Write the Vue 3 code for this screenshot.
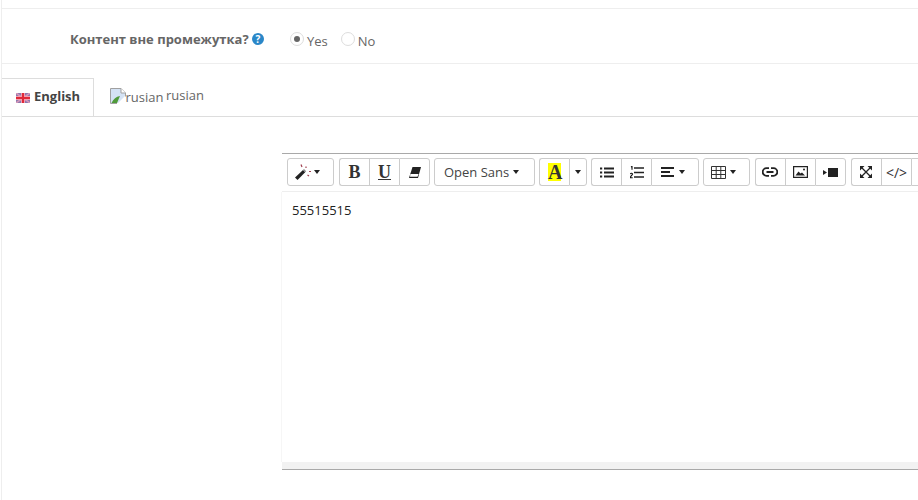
<script setup>
</script>

<template>
  <div class="page">
    <div class="row radio-row">
      <div class="label">Контент вне промежутка? <span class="help">?</span></div>
      <div class="radios">
        <label class="radio"><span class="dot on"></span><span class="rt">Yes</span></label>
        <label class="radio"><span class="dot"></span><span class="rt">No</span></label>
      </div>
    </div>
    <div class="tabs">
      <div class="tab active">
        <svg class="flag" width="14" height="10" viewBox="0 0 14 10"><rect width="14" height="10" fill="#8a78b0"/><path d="M0 0l14 10M14 0L0 10" stroke="#d898b8" stroke-width="1.500"/><path d="M7 0v10M0 5h14" stroke="#f0a0b0" stroke-width="4"/><path d="M7 0v10M0 5h14" stroke="#e02838" stroke-width="2"/></svg>
        <span>English</span>
      </div>
      <div class="tab other">
        <svg class="broken" width="16" height="16" viewBox="0 0 16 16"><path d="M1 1h10v4h4v3L8 15H1z" fill="#d4e2f4"/><path d="M1.500 15c2-4 4.500-6.500 8.500-7l-3 7z" fill="#4f9a3a"/><path d="M.5 15.500V.5h10.500l4.500 4.500v3.500M.5 15.500h6.500" fill="none" stroke="#a0a0a0"/><path d="M11 .5V5h4.500" fill="#fff" stroke="#a0a0a0"/></svg><span class="alt">rusian</span>
        <span class="name">rusian</span>
      </div>
    </div>
    <div class="editor-wrap">
      <div class="editor">
        <div class="toolbar">
          <div class="group wider"><button class="btn w47 start"><svg width="16" height="16" viewBox="0 0 16 16"><path d="M0 13.500L8 6l2.200 2.200L2.500 16z" fill="#222"/><path d="M8 6l1-1 2.200 2.200-1 1z" fill="#888"/><path d="M6 .5l1 2.500M11 2.500V4M14 7.500h2M12.500 11l1.500 1" stroke="#a04050" stroke-width="1.200"/></svg><i class="caret c2"></i></button></div>
          <div class="group">
            <button class="btn w30 serif">B</button>
            <button class="btn w30 serif u">U</button>
            <button class="btn w31"><svg width="12" height="11" viewBox="0 0 12 11"><path d="M3.500 0H12L9 11H0z" fill="#222"/><path d="M1.400 7h8.200L8.500 9.800H1z" fill="#fff"/></svg></button>
          </div>
          <div class="group"><button class="btn w101 font">Open Sans<i class="caret c4"></i></button></div>
          <div class="group">
            <button class="btn w30"><span class="hl">A</span></button>
            <button class="btn w18"><i class="caret c0"></i></button>
          </div>
          <div class="group">
            <button class="btn w30"><svg width="14" height="11" viewBox="0 0 14 11"><path d="M4 1.500h10M4 5.500h10M4 9.500h10" stroke="#222" stroke-width="1.800"/><path d="M0 1.500h2.200M0 5.500h2.200M0 9.500h2.200" stroke="#222" stroke-width="2"/></svg></button>
            <button class="btn w30"><svg width="14" height="13" viewBox="0 0 14 13"><path d="M4 2h10M4 6.500h10M4 11h10" stroke="#222" stroke-width="1.700"/><path d="M1 1l1-.6v3.400M.3 8c.4-1 2.400-1 2.200.3-.1.8-2 1.500-2.200 3.400h2.400" fill="none" stroke="#111" stroke-width="1.100"/></svg></button>
            <button class="btn w48 start s8"><svg width="13" height="10" viewBox="0 0 13 10"><path d="M0 1h13M0 5h9M0 9h13" stroke="#222" stroke-width="1.800"/></svg><i class="caret c1"></i></button>
          </div>
          <div class="group wider"><button class="btn w47 start"><svg width="15" height="13" viewBox="0 0 15 13"><path d="M.5.5h14v12H.5zM.5 4.500h14M.5 8.500h14M5.200.5v12M9.800.5v12" fill="none" stroke="#333"/></svg><i class="caret c4"></i></button></div>
          <div class="group wider">
            <button class="btn w30"><svg class="nudge" width="16" height="10" viewBox="0 0 16 10"><path d="M7 1.200H4.500a3.800 3.800 0 0 0 0 7.600H7M9 1.200h2.500a3.800 3.800 0 0 1 0 7.600H9M4.500 5h7" fill="none" stroke="#222" stroke-width="1.800"/></svg></button>
            <button class="btn w30"><svg width="15" height="12" viewBox="0 0 15 12"><path d="M.6.6h13.800v10.800H.6z" fill="#fff" stroke="#222" stroke-width="1.200"/><path d="M2.500 9.500l3-4 2 2 1.500-1 3 3z" fill="#222"/><circle cx="11" cy="3.500" r="1" fill="#222"/></svg></button>
            <button class="btn w31"><svg width="15" height="9" viewBox="0 0 15 9"><path d="M5 0h10v9H5z" fill="#222"/><path d="M0 2l4 2.500L0 7z" fill="#222"/></svg></button>
          </div>
          <div class="group">
            <button class="btn w30"><svg class="nudge" width="12" height="12" viewBox="0 0 12 12"><path d="M2 2l8 8M10 2l-8 8" stroke="#222" stroke-width="1.300"/><path d="M0 0h4.500L0 4.500zM12 0v4.500L7.500 0zM0 12V7.500L4.500 12zM12 12H7.500L12 7.500z" fill="#222"/></svg></button>
            <button class="btn w30 code">&lt;/&gt;</button>
            <button class="btn w30"></button>
          </div>
        </div>
        <div class="content">55515515</div>
        <div class="status"></div>
      </div>
    </div>
  </div>
</template>

<style>
html, body { margin: 0; background: #fff; overflow: hidden; }
</style>

<style scoped>
.page {
  width: 917px;
  height: 500px;
  overflow: hidden;
  box-sizing: border-box;
  padding-top: 8px;
  border-left: 1px solid #eee;
  margin-left: 1px;
  font-family: "Open Sans", sans-serif;
  font-size: 13px;
  color: #555;
}
.radio-row {
  display: flex;
  height: 56px;
  box-sizing: border-box;
  border-top: 1px solid #eee;
  border-bottom: 1px solid #eee;
  align-items: flex-start;
}
.label {
  width: 262px;
  box-sizing: border-box;
  text-align: right;
  font-weight: 700;
  color: #666;
  padding-top: 21px;
  line-height: 18px;
  white-space: nowrap;
}
.help {
  display: inline-block;
  width: 12px;
  height: 12px;
  border-radius: 50%;
  background: #2a87c8;
  color: #fff;
  font-size: 10px;
  line-height: 12px;
  text-align: center;
  vertical-align: 1px;
}
.radios { display: flex; gap: 13px; padding-left: 26px; padding-top: 23px; }
.radio { display: flex; align-items: flex-start; color: #666; }
.rt { line-height: 18px; margin-left: 3px; }
.dot {
  width: 14px;
  height: 14px;
  border: 1px solid #ddd;
  border-radius: 50%;
  box-sizing: border-box;
  position: relative;
  display: block;
}
.dot.on::after {
  content: "";
  position: absolute;
  left: 3px;
  top: 3px;
  width: 6px;
  height: 6px;
  border-radius: 50%;
  background: #666;
}
.tabs {
  display: flex;
  margin-top: 14px;
  height: 39px;
  box-sizing: border-box;
  border-bottom: 1px solid #ddd;
}
.tab {
  display: flex;
  align-items: center;
  height: 38px;
  box-sizing: border-box;
  white-space: nowrap;
  padding-bottom: 4px;
}
.tab.active {
  width: 93px;
  margin-left: -1px;
  padding-left: 14px;
  border: 1px solid #ddd;
  border-bottom: 0;
  font-weight: 700;
  color: #444;
  gap: 4px;
}
.flag { flex: none; margin-top: 5px; }
.tab.other { padding-left: 16px; color: #666; }
.broken { flex: none; margin-top: 2px; }
.alt { margin-top: 4px; margin-right: 3px; margin-left: -0.5px; }
.name { margin-left: -0.5px; }
.editor-wrap { padding-left: 280px; padding-top: 36px; }
.editor {
  width: 700px;
  height: 317px;
  box-sizing: border-box;
  border-top: 1px solid #a9a9a9;
  border-bottom: 1px solid #a9a9a9;
  display: flex;
  flex-direction: column;
}
.toolbar {
  display: flex;
  gap: 4px;
  height: 38px;
  box-sizing: border-box;
  padding: 4px 0 0 5px;
  background: #fff;
  border-bottom: 1px solid #eee;
  flex: none;
  align-items: flex-start;
}
.group { display: flex; flex: none; }
.wider { margin-right: 1px; }
.btn {
  display: flex;
  align-items: center;
  justify-content: center;
  height: 28px;
  box-sizing: border-box;
  border: 1px solid #ccc;
  border-right-width: 0;
  background: #fff;
  padding: 0;
  font: inherit;
  color: #333;
  flex: none;
}
.group .btn:first-child { border-radius: 3px 0 0 3px; }
.group .btn:last-child { border-right-width: 1px; border-radius: 0 3px 3px 0; }
.group .btn:only-child { border-radius: 3px; }
.start { justify-content: flex-start; padding-left: 7px; }
.s8 { padding-left: 9px; }
.nudge { margin-right: 1px; }
.w18 { width: 18px; }
.w30 { width: 30px; }
.w31 { width: 31px; }
.w47 { width: 47px; }
.w48 { width: 48px; }
.w101 { width: 101px; }
.serif { font-family: "Liberation Serif", serif; font-weight: 700; font-size: 18px; color: #333; }
.u { text-decoration: underline; }
.font { color: #444; font-size: 13px; justify-content: flex-start; padding-left: 9px; }
.caret {
  width: 0;
  height: 0;
  border-left: 3.5px solid transparent;
  border-right: 3.5px solid transparent;
  border-top: 4px solid #222;
  margin-left: 6px;
}
.c2 { margin-left: 3px; }
.c4 { margin-left: 4px; }
.c1 { margin-left: 5px; }
.c0 { margin-left: 0; }
.hl {
  display: block;
  background: #ff0;
  font-family: "Liberation Serif", serif;
  font-weight: 700;
  font-size: 20px;
  line-height: 18px;
  width: 13px;
  height: 18px;
  color: #333;
  text-align: center;
}
.code { font-size: 14px; color: #333; }
.content {
  flex: 1;
  padding: 9px 10px;
  box-sizing: border-box;
  color: #222;
  font-size: 13px;
  line-height: 18px;
  border-left: 1px solid #f6f6f6;
  margin-left: -1px;
}
.status { height: 7px; background: #f2f2f2; flex: none; }
</style>
